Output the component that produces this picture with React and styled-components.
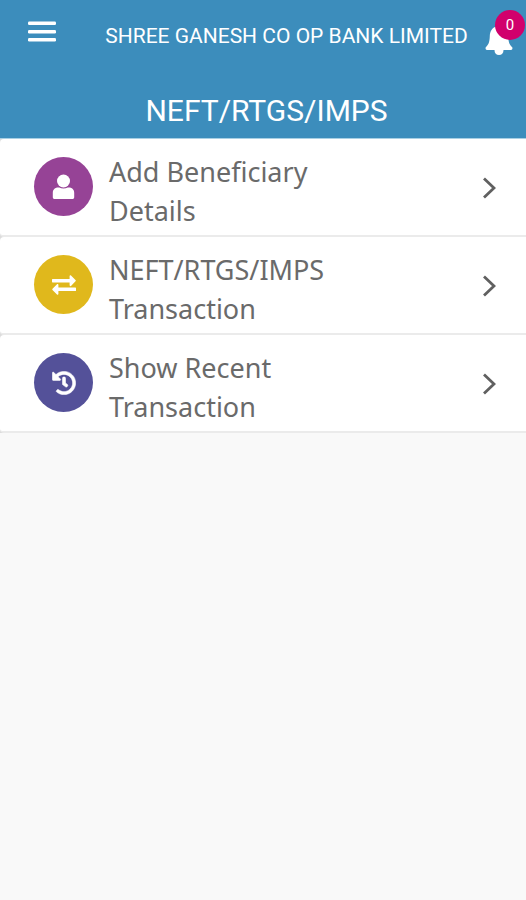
import React from "react";
import styled, { createGlobalStyle } from "styled-components";

const menuItems = [
	{ id: "beneficiary", lines: ["Add Beneficiary", "Details"], color: "#964396", icon: UserIcon },
	{ id: "transfer", lines: ["NEFT/RTGS/IMPS", "Transaction"], color: "#e0b81c", icon: ExchangeIcon },
	{ id: "recent", lines: ["Show Recent", "Transaction"], color: "#545199", icon: HistoryIcon },
];

function UserIcon() {
	return (
		<svg width="24" height="26" viewBox="0 0 24 26" fill="#fff" aria-hidden="true">
			<circle cx="11.500" cy="7" r="6.500" />
			<path d="M6 13.600h1.200c1.300.7 2.800 1 4.300 1s3-.3 4.300-1H17c3 0 5.200 2.200 5.200 5.200v4.400c0 1-.8 1.800-1.800 1.800H2.600c-1 0-1.800-.8-1.800-1.800v-4.400c0-3 2.200-5.200 5.200-5.200z" />
		</svg>
	);
}

function ExchangeIcon() {
	return (
		<svg width="24" height="20" viewBox="0 0 24 20" fill="#fff" aria-hidden="true">
			<path d="M.6 3.900h17V1c0-.8.9-1.100 1.400-.6l4.500 4.600c.4.400.4.900 0 1.300L19 10.900c-.5.500-1.400.2-1.400-.6V7.400H.6c-.4 0-.6-.2-.6-.6V4.500c0-.4.2-.6.6-.6z" />
			<path d="M23.400 12.600h-17V9.800c0-.8-.9-1.100-1.400-.6L.5 13.700c-.4.400-.4.900 0 1.300L5 19.500c.5.500 1.400.2 1.400-.6v-2.800h17c.4 0 .6-.2.6-.6v-2.300c0-.4-.2-.6-.6-.6z" />
		</svg>
	);
}

function HistoryIcon() {
	return (
		<svg width="24" height="24" viewBox="0 0 512 512" fill="#fff" stroke="#fff" strokeWidth="12" aria-hidden="true">
			<path d="M504 255.531c.253 136.640-111.180 248.372-247.820 248.468-59.015.042-113.223-20.530-155.822-54.911-11.077-8.940-11.905-25.541-1.839-35.607l11.267-11.267c8.609-8.609 22.353-9.551 31.891-1.984C173.062 425.135 212.781 440 256 440c101.705 0 184-82.311 184-184 0-101.705-82.311-184-184-184-48.814 0-93.149 18.969-126.068 49.932l50.754 50.754c10.080 10.080 2.941 27.314-11.313 27.314H24c-8.837 0-16-7.163-16-16V38.627c0-14.254 17.234-21.393 27.314-11.314l49.372 49.372C129.209 34.136 189.552 8 256 8c136.810 0 247.747 110.780 248 247.531zm-180.912 78.784l9.823-12.630c8.138-10.463 6.253-25.542-4.210-33.679L288 256.349V152c0-13.255-10.745-24-24-24h-16c-13.255 0-24 10.745-24 24v135.651l65.409 50.874c10.463 8.137 25.541 6.253 33.679-4.210z" />
		</svg>
	);
}

function MenuIcon() {
	return (
		<svg width="28" height="21" viewBox="0 0 28 21" fill="#fff" aria-hidden="true">
			<rect y="0.500" width="28" height="3.500" rx="1.200" />
			<rect y="9" width="28" height="3.500" rx="1.200" />
			<rect y="17" width="28" height="3.500" rx="1.200" />
		</svg>
	);
}

function BellIcon() {
	return (
		<svg width="28" height="32" viewBox="0 0 28 32" fill="#fff" aria-hidden="true">
			<path d="M14 0c1.500 0 2.500 1 2.500 2.500 4.500 1.200 6.500 5 6.700 9.500.2 5.500.8 8 3.800 11.100.9.900.5 2.900-1 2.900H2c-1.500 0-1.900-2-1-2.900 3-3.100 3.600-5.600 3.800-11.100.2-4.500 2.200-8.300 6.700-9.500C11.500 1 12.500 0 14 0z" />
			<path d="M9.500 26h9c0 3.200-1.800 5-4.500 5s-4.500-1.800-4.500-5z" />
		</svg>
	);
}

function ChevronIcon() {
	return (
		<svg width="14" height="22" viewBox="0 0 14 22" fill="none" stroke="#606060" strokeWidth="2.800" aria-hidden="true">
			<path d="M2 1.500L12 11L2 20.500" />
		</svg>
	);
}

function Header(props) {
	return (
		<HeaderSection>
			<NavBar>
				<MenuButton type="button" aria-label="Menu">
					<MenuIcon />
				</MenuButton>
				<BankName>SHREE GANESH CO OP BANK LIMITED</BankName>
				<BellButton type="button" aria-label="Notifications">
					<BellIcon />
					<BellCount>{props.count}</BellCount>
				</BellButton>
			</NavBar>
			<Heading>NEFT/RTGS/IMPS</Heading>
		</HeaderSection>
	);
}

function App() {
	return (
		<div>
			<GlobalStyle />
			<Header count={0} />
			<MenuList>
				{menuItems.map(({ id, lines, color, icon: Icon }) => (
					<MenuItem key={id}>
						<ItemButton type="button">
							<IconCircle $color={color}>
								<Icon />
							</IconCircle>
							<ItemLabel>
								{lines.map((line) => (
									<LabelLine key={line}>{line}</LabelLine>
								))}
							</ItemLabel>
							<ItemArrow>
								<ChevronIcon />
							</ItemArrow>
						</ItemButton>
					</MenuItem>
				))}
			</MenuList>
		</div>
	);
}

const GlobalStyle = createGlobalStyle`
	* {
		box-sizing: border-box;
	}
	body {
		margin: 0;
		background: #f9f9f9;
		font-family: Roboto, sans-serif;
	}
	button {
		padding: 0;
		border: 0;
		background: none;
		font: inherit;
		cursor: pointer;
	}
`;
const HeaderSection = styled.header`
	background: #3c8dbc;
	color: #fff;
	padding-bottom: 7px;
	border-bottom: 1px solid #a9d0e4;
`;
const NavBar = styled.div`
	display: flex;
	align-items: flex-start;
	justify-content: space-between;
	height: 91px;
	padding: 21px 13px 0 28px;
`;
const MenuButton = styled.button`
	display: flex;
	color: #fff;
`;
const BankName = styled.div`
	margin-left: 32px;
	font-size: 21px;
	line-height: 30px;
	white-space: nowrap;
`;
const BellButton = styled.button`
	position: relative;
	display: flex;
	padding-top: 3px;
`;
const BellCount = styled.span`
	position: absolute;
	top: -11px;
	right: -12px;
	width: 30px;
	height: 30px;
	border-radius: 50%;
	background: #d1006c;
	color: #fff;
	font-size: 15px;
	line-height: 30px;
	text-align: center;
`;
const Heading = styled.h1`
	margin: 0;
	padding-left: 7px;
	font-size: 30px;
	font-weight: 400;
	line-height: 40px;
	text-align: center;
`;
const MenuList = styled.ul`
	margin: 0;
	padding: 0;
	list-style: none;
	background: #dcdcdc;
`;
const MenuItem = styled.li`
	background: #fff;
	border-bottom: 2px solid #ebebeb;
	border-radius: 4px 0 0 4px;
`;
const ItemButton = styled.button`
	display: flex;
	align-items: flex-start;
	width: 100%;
	padding: 13px 30px 5px 34px;
	text-align: left;
`;
const IconCircle = styled.span`
	display: flex;
	align-items: center;
	justify-content: center;
	flex-shrink: 0;
	width: 59px;
	height: 59px;
	margin-top: 5px;
	border-radius: 50%;
	background: ${(props) => props.$color};
`;
const ItemLabel = styled.span`
	flex: 1;
	margin-left: 16px;
	color: #6a6a6a;
	font-family: "Noto Sans", sans-serif;
	font-size: 27px;
	line-height: 39px;
`;
const LabelLine = styled.span`
	display: block;
`;
const ItemArrow = styled.span`
	display: flex;
	margin-top: 25px;
`;
export default App;
